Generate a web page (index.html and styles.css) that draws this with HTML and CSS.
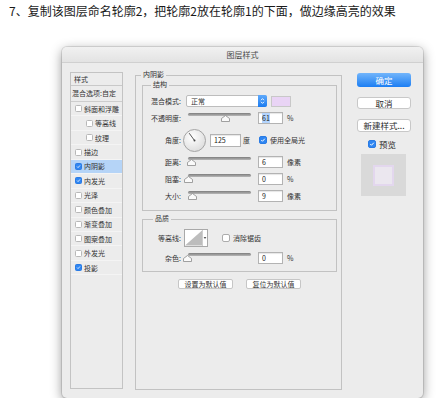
FILE: index.html
```html
<!DOCTYPE html>
<html lang="zh-CN">
<head>
<meta charset="utf-8">
<title>图层样式</title>
<link rel="stylesheet" href="styles.css">
</head>
<body>
<p class="caption">7、复制该图层命名轮廓2，把轮廓2放在轮廓1的下面，做边缘高亮的效果</p>
<div class="dialog">
  <div class="titlebar">图层样式</div>
  <div class="dlg-body">
    <div class="styles-list">
      <div class="sl-head">样式</div>
      <div class="sl-blend">混合选项:自定</div>
      <div class="sl-item"><span class="cb"></span>斜面和浮雕</div>
      <div class="sl-item sub"><span class="cb"></span>等高线</div>
      <div class="sl-item sub"><span class="cb"></span>纹理</div>
      <div class="sl-item"><span class="cb"></span>描边</div>
      <div class="sl-item sel"><span class="cb on"><svg viewBox="0 0 8 8"><path d="M1.7 4.1 L3.3 5.7 L6.4 2.3"/></svg></span>内阴影</div>
      <div class="sl-item"><span class="cb on"><svg viewBox="0 0 8 8"><path d="M1.7 4.1 L3.3 5.7 L6.4 2.3"/></svg></span>内发光</div>
      <div class="sl-item"><span class="cb"></span>光泽</div>
      <div class="sl-item"><span class="cb"></span>颜色叠加</div>
      <div class="sl-item"><span class="cb"></span>渐变叠加</div>
      <div class="sl-item"><span class="cb"></span>图案叠加</div>
      <div class="sl-item"><span class="cb"></span>外发光</div>
      <div class="sl-item"><span class="cb on"><svg viewBox="0 0 8 8"><path d="M1.7 4.1 L3.3 5.7 L6.4 2.3"/></svg></span>投影</div>
    </div>

    <div class="main">
      <span class="legend">内阴影</span>
      <div class="group struct">
        <span class="legend l2">结构</span>
        <div class="row">
          <span class="lbl">混合模式:</span>
          <div class="select"><span>正常</span><span class="stepper"><svg width="5" height="8" viewBox="0 0 5 8"><path d="M1 3.2 L2.5 1.6 L4 3.2 M1 4.8 L2.5 6.4 L4 4.8"/></svg></span></div>
          <span class="swatch"></span>
        </div>
        <div class="row">
          <span class="lbl">不透明度:</span>
          <div class="slider"><span class="track"></span><svg class="thumb" style="left:33px" viewBox="0 0 9 7"><path d="M0.5 6.5 V3.5 L4.5 0.5 L8.5 3.5 V6.5 Z"/></svg></div>
          <span class="num"><span class="hl">61</span></span>
          <span class="unit">%</span>
        </div>
        <div class="row dial-row">
          <span class="lbl">角度:</span>
          <svg class="dial" viewBox="0 0 23 23"><defs><radialGradient id="dg" cx="40%" cy="35%" r="70%"><stop offset="0" stop-color="#ffffff"/><stop offset="1" stop-color="#dcdcdc"/></radialGradient></defs><circle cx="11.5" cy="11.5" r="11" fill="url(#dg)" stroke="#a4a4a4"/><path d="M11.5 11.5 L6.2 4.2" stroke="#444" stroke-width="0.9"/><circle cx="11.5" cy="11.5" r="1" fill="#444"/></svg>
          <span class="num wide">125</span>
          <span class="unit u2">度</span>
          <span class="cbx on"><svg viewBox="0 0 8 8"><path d="M1.7 4.1 L3.3 5.7 L6.4 2.3"/></svg></span>
          <span class="cb-text">使用全局光</span>
        </div>
        <div class="row">
          <span class="lbl">距离:</span>
          <div class="slider"><span class="track"></span><svg class="thumb" style="left:-1px" viewBox="0 0 9 7"><path d="M0.5 6.5 V3.5 L4.5 0.5 L8.5 3.5 V6.5 Z"/></svg></div>
          <span class="num">6</span>
          <span class="unit">像素</span>
        </div>
        <div class="row">
          <span class="lbl">阻塞:</span>
          <div class="slider"><span class="track"></span><svg class="thumb" style="left:-4px" viewBox="0 0 9 7"><path d="M0.5 6.5 V3.5 L4.5 0.5 L8.5 3.5 V6.5 Z"/></svg></div>
          <span class="num">0</span>
          <span class="unit">%</span>
        </div>
        <div class="row">
          <span class="lbl">大小:</span>
          <div class="slider"><span class="track"></span><svg class="thumb" style="left:0px" viewBox="0 0 9 7"><path d="M0.5 6.5 V3.5 L4.5 0.5 L8.5 3.5 V6.5 Z"/></svg></div>
          <span class="num">9</span>
          <span class="unit">像素</span>
        </div>
      </div>

      <div class="group quality">
        <span class="legend l3">品质</span>
        <div class="row contour-row">
          <span class="lbl">等高线:</span>
          <div class="contour"><svg width="18" height="16" viewBox="0 0 18 16"><path d="M0 16 L18 0 L18 16 Z" fill="#bdbdbd"/></svg><span class="c-arrow"><svg width="4" height="16" viewBox="0 0 4 16"><path d="M0.6 7 H3.4 L2 9 Z" fill="#555"/></svg></span></div>
          <span class="cbx q"></span>
          <span class="cb-text">消除锯齿</span>
        </div>
        <div class="row">
          <span class="lbl">杂色:</span>
          <div class="slider"><span class="track"></span><svg class="thumb" style="left:-5px" viewBox="0 0 9 7"><path d="M0.5 6.5 V3.5 L4.5 0.5 L8.5 3.5 V6.5 Z"/></svg></div>
          <span class="num">0</span>
          <span class="unit">%</span>
        </div>
      </div>

      <div class="defaults">
        <span class="dbtn">设置为默认值</span>
        <span class="dbtn">复位为默认值</span>
      </div>
    </div>

    <div class="side">
      <div class="btn-ok">确定</div>
      <div class="btn b1">取消</div>
      <div class="btn b2">新建样式...</div>
      <div class="pv-row"><span class="cbx big on"><svg viewBox="0 0 8 8"><path d="M1.7 4.1 L3.3 5.7 L6.4 2.3"/></svg></span><span class="pv-text">预览</span></div>
      <div class="preview"><span class="pv-inner"></span></div>
    </div>
  </div>
</div>
</body>
</html>
```

FILE: styles.css
```css
body {
  margin: 0;
  background: #ffffff;
  font-family: "Noto Sans CJK SC", "Noto Sans", sans-serif;
  color: #222;
}

.caption {
  margin: 3px 0 0 9px;
  font-size: 12px;
  line-height: 16px;
  color: #1a1a1a;
}

.dialog {
  margin: 28px 0 0 62px;
  width: 361px;
  height: 351px;
  background: #ececec;
  border-radius: 5px;
  box-shadow: 0 3px 12px rgba(0, 0, 0, 0.42), 0 0 0 1px rgba(0, 0, 0, 0.1);
  display: flex;
  flex-direction: column;
}

.titlebar {
  height: 15px;
  line-height: 15px;
  font-size: 8px;
  text-align: center;
  color: #4a4a4a;
  background: linear-gradient(#f1f1f1, #e3e3e3);
  border-bottom: 1px solid #d0d0d0;
  border-radius: 5px 5px 0 0;
}

.dlg-body {
  display: flex;
  align-items: flex-start;
  padding: 9px 0 0 8px;
}

/* left styles list */
.styles-list {
  width: 53px;
  height: 317px;
  box-sizing: border-box;
  border: 1px solid #c3c3c3;
  font-size: 7px;
  color: #333;
  overflow: hidden;
}

.sl-head {
  height: 12px;
  line-height: 12px;
  padding-left: 3px;
  border-bottom: 1px solid #c9c9c9;
}

.sl-blend {
  height: 15px;
  line-height: 15px;
  padding-left: 1px;
  border-bottom: 1px solid #cdcdcd;
  white-space: nowrap;
  overflow: hidden;
}

.sl-item {
  height: 14.45px;
  box-sizing: border-box;
  display: flex;
  align-items: center;
  padding-left: 4px;
  border-bottom: 1px solid #f4f4f4;
  white-space: nowrap;
}

.sl-item.sub {
  padding-left: 15px;
}

.sl-item.sel {
  background: #b5d4f7;
}

.cb {
  width: 7px;
  height: 7px;
  box-sizing: border-box;
  border: 1px solid #b8b8b8;
  background: #fff;
  border-radius: 1.5px;
  margin-right: 2px;
  flex: none;
  display: flex;
}

.cb.on,
.cbx.on {
  background: #2f86f2;
  border-color: #2a7be4;
}

.cb svg,
.cbx svg {
  width: 100%;
  height: 100%;
}

.cb svg path,
.cbx svg path {
  fill: none;
  stroke: #fff;
  stroke-width: 1.3;
}

/* main panel */
.main {
  position: relative;
  margin: 3px 0 0 12px;
  width: 207px;
  height: 315px;
  box-sizing: border-box;
  border: 1px solid #c2c2c2;
  padding: 9px 4px 0 6px;
  font-size: 7px;
  color: #333;
  flex: none;
}

.legend {
  position: absolute;
  top: -6px;
  left: 5px;
  padding: 0 2px;
  line-height: 9px;
  background: #ececec;
  white-space: nowrap;
}

.legend.l2 {
  left: 8px;
}

.legend.l3 {
  left: 10px;
}

.group {
  position: relative;
  border: 1px solid #c2c2c2;
  box-sizing: border-box;
  display: flex;
  flex-direction: column;
  gap: 5px;
}

.struct {
  height: 126px;
  padding-top: 9px;
}

.quality {
  height: 53px;
  margin-top: 8px;
  padding-top: 9px;
}

.row {
  display: flex;
  align-items: center;
  height: 12px;
  white-space: nowrap;
}

.row.dial-row {
  height: 22px;
}

.row.contour-row {
  height: 18px;
}

.lbl {
  width: 38px;
  flex: none;
  text-align: right;
  line-height: 12px;
}

.select {
  margin-left: 5px;
  width: 81px;
  height: 12px;
  box-sizing: border-box;
  background: #fff;
  border: 1px solid #bdbdbd;
  border-radius: 2px;
  display: flex;
  align-items: center;
  justify-content: space-between;
  padding-left: 4px;
  flex: none;
}

.stepper {
  width: 9px;
  height: 12px;
  margin-right: -1px;
  background: linear-gradient(#5ea9fb, #1b7bf0);
  border-radius: 0 2px 2px 0;
  display: flex;
  align-items: center;
  justify-content: center;
}

.stepper path {
  fill: none;
  stroke: #fff;
  stroke-width: 0.9;
}

.swatch {
  margin-left: 4px;
  width: 20px;
  height: 11px;
  box-sizing: border-box;
  background: #e9d4f5;
  border: 1px solid #c8c8c8;
  flex: none;
}

.slider {
  position: relative;
  margin-left: 7px;
  width: 63px;
  height: 12px;
  flex: none;
}

.track {
  position: absolute;
  left: 0;
  right: 0;
  top: 1px;
  height: 3px;
  background: linear-gradient(#7d7d7d, #b8b8b8);
  border-radius: 1.5px;
}

.thumb {
  position: absolute;
  top: 3px;
  width: 9px;
  height: 7px;
}

.thumb path {
  fill: #fafafa;
  stroke: #8a8a8a;
  stroke-width: 0.8;
}

.num {
  margin-left: 7px;
  width: 25px;
  height: 12px;
  box-sizing: border-box;
  background: #fff;
  border: 1px solid #b3b3b3;
  box-shadow: inset 0 1px 1px rgba(0, 0, 0, 0.1);
  padding-left: 3px;
  line-height: 10px;
  color: #222;
  flex: none;
}

.num.wide {
  margin-left: 4px;
  width: 31px;
  height: 13px;
  line-height: 11px;
}

.hl {
  background: #b4d5fe;
}

.unit {
  margin-left: 4px;
}

.unit.u2 {
  margin-left: 2px;
}

.dial {
  margin-left: 2px;
  width: 23px;
  height: 23px;
  flex: none;
}

.cbx {
  width: 8px;
  height: 8px;
  box-sizing: border-box;
  border: 1px solid #acacac;
  background: #fff;
  border-radius: 2px;
  margin-left: 9px;
  flex: none;
  display: flex;
}

.cbx.q {
  margin-left: 14px;
}

.cb-text {
  margin-left: 3px;
}

.contour {
  margin-left: 3px;
  width: 24px;
  height: 18px;
  box-sizing: border-box;
  border: 1px solid #a9a9a9;
  background: #fff;
  display: flex;
  flex: none;
}

.c-arrow {
  width: 4px;
  border-left: 1px solid #cfcfcf;
  display: flex;
}

.defaults {
  display: flex;
  justify-content: center;
  gap: 13px;
  margin-top: 7px;
}

.dbtn {
  width: 55px;
  height: 10px;
  box-sizing: border-box;
  background: #fff;
  border: 1px solid #c6c6c6;
  border-radius: 2px;
  text-align: center;
  line-height: 8px;
  font-size: 7px;
  color: #333;
}

/* right column */
.side {
  margin: 1px 0 0 15px;
  width: 54px;
  display: flex;
  flex-direction: column;
  font-size: 8.5px;
  color: #2a2a2a;
  flex: none;
}

.btn-ok {
  height: 14px;
  border-radius: 3px;
  background: linear-gradient(#72b5fb, #1c7ef3);
  color: #fff;
  text-align: center;
  line-height: 14px;
}

.btn {
  box-sizing: border-box;
  background: #fff;
  border: 1px solid #c8c8c8;
  border-radius: 3px;
  text-align: center;
  white-space: nowrap;
}

.btn.b1 {
  margin-top: 10px;
  height: 12px;
  line-height: 10px;
}

.btn.b2 {
  margin-top: 10px;
  height: 13px;
  line-height: 11px;
}

.pv-row {
  display: flex;
  align-items: center;
  margin: 7px 0 0 11px;
  height: 9px;
}

.cbx.big {
  margin-left: 0;
}

.pv-text {
  margin-left: 3px;
}

.preview {
  margin: 6px 0 0 4px;
  width: 45px;
  height: 42px;
  background: #d9d9d9;
  display: flex;
  align-items: center;
  justify-content: center;
}

.pv-inner {
  width: 21px;
  height: 21px;
  box-sizing: border-box;
  border: 2px solid #e3d7ee;
  background: #ebe7ef;
}
```
